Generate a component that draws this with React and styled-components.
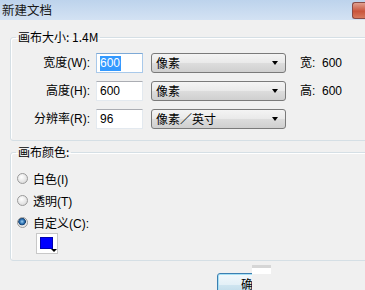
import styled, { createGlobalStyle } from 'styled-components'

const GlobalStyle = createGlobalStyle`
  html, body {
    margin: 0;
    padding: 0;
    background: #f0f0f0;
  }
  body {
    font-family: "Liberation Sans", "Noto Sans CJK SC", sans-serif;
    font-size: 12px;
    color: #000;
  }
`

const sizeRows = [
  { label: '宽度(W):', value: '600', unit: '像素', info: '宽:  600', focused: true },
  { label: '高度(H):', value: '600', unit: '像素', info: '高:  600' },
  { label: '分辨率(R):', value: '96', unit: '像素／英寸' },
]

const colorOptions = [
  { label: '白色(I)' },
  { label: '透明(T)' },
  { label: '自定义(C):', checked: true },
]

export default function App() {
  return (
    <>
      <GlobalStyle />
      <Window>
        <TitleBar>
          <Title>新建文档</Title>
          <CloseButton />
        </TitleBar>

        <Group $mt={10} $pt={9} $pb={11}>
          <Legend>画布大小: 1.4M</Legend>
          <SizeGrid>
            {sizeRows.map((row) => (
              <SizeRow key={row.label}>
                <FieldLabel>{row.label}</FieldLabel>
                <TextInput $focused={row.focused}>
                  {row.focused ? <Selected>{row.value}</Selected> : row.value}
                </TextInput>
                <Select>
                  <span>{row.unit}</span>
                  <SelectArrow />
                </Select>
                <Info>{row.info}</Info>
              </SizeRow>
            ))}
          </SizeGrid>
        </Group>

        <Group $mt={4} $pt={8} $pb={6}>
          <Legend>画布颜色:</Legend>
          {colorOptions.map((opt) => (
            <RadioRow key={opt.label}>
              <Radio $checked={opt.checked} />
              <span>{opt.label}</span>
            </RadioRow>
          ))}
          <Swatch>
            <SwatchColor />
            <SwatchArrow />
          </Swatch>
        </Group>

        <Footer>
          <OkButton>确</OkButton>
          <Cover>
            <CoverGrey />
            <CoverWhite />
          </Cover>
        </Footer>
      </Window>
    </>
  )
}

const Window = styled.div`
  position: relative;
  width: 365px;
  height: 290px;
  overflow: hidden;
  background: #f0f0f0;
`

const TitleBar = styled.div`
  display: flex;
  align-items: center;
  justify-content: space-between;
  height: 20px;
  background: linear-gradient(#bdd3ec, #d3e2f3);
`

const Title = styled.div`
  padding-left: 2px;
  font-family: "Noto Sans CJK SC", sans-serif;
  font-size: 12.5px;
  line-height: 16px;
  color: #1a1a1a;
`

const CloseButton = styled.div`
  align-self: flex-start;
  margin-top: 2px;
  width: 12px;
  height: 15px;
  border: 1px solid #8a4b45;
  border-right: none;
  border-radius: 3px 0 0 3px;
  background: linear-gradient(#e0a08f, #c9553c 55%, #d77a5e);
`

const Group = styled.fieldset`
  margin: ${({ $mt }) => $mt}px 0 0 10px;
  padding: ${({ $pt }) => $pt}px 0 ${({ $pb }) => $pb}px 0;
  width: 370px;
  border: 1px solid #d5dfe5;
  border-radius: 3px;
  box-shadow: inset 1px 1px 0 #fff;
  min-width: 0;
`

const Legend = styled.legend`
  margin-left: 5px;
  padding: 0 2px;
  font-family: "Noto Sans CJK SC", sans-serif;
  font-size: 12px;
  line-height: 14px;
  height: 14px;
`

const SizeGrid = styled.div`
  display: flex;
  flex-direction: column;
  gap: 8px;
`

const SizeRow = styled.div`
  display: grid;
  grid-template-columns: 79px 47px 137px auto;
  column-gap: 6px;
  align-items: center;
  height: 20px;

  & > :nth-child(3) {
    margin-left: 2px;
  }
  & > :nth-child(4) {
    margin-left: 8px;
  }
`

const FieldLabel = styled.div`
  text-align: right;
  line-height: 20px;
  white-space: nowrap;
`

const TextInput = styled.div`
  box-sizing: border-box;
  height: 20px;
  padding: 2px 0 0 3px;
  background: #fff;
  border: 1px solid ${({ $focused }) => ($focused ? '#a9c9ea' : '#e3e9ef')};
  border-top-color: ${({ $focused }) => ($focused ? '#7da9d6' : '#abadb3')};
  line-height: 15px;
  font-size: 12px;
`

const Selected = styled.span`
  display: inline-block;
  background: #3399ff;
  color: #fff;
  padding-right: 1px;
`

const Select = styled.div`
  box-sizing: border-box;
  display: flex;
  align-items: center;
  justify-content: space-between;
  height: 20px;
  padding: 0 7px 0 4px;
  border: 1px solid #7a7a7a;
  border-radius: 3px;
  background: linear-gradient(#f4f4f4, #e9e9e9 50%, #dcdcdc 52%, #cfcfcf);
  font-family: "Noto Sans CJK SC", sans-serif;
  line-height: 18px;
`

const SelectArrow = styled.div`
  width: 0;
  height: 0;
  border-left: 3.5px solid transparent;
  border-right: 3.5px solid transparent;
  border-top: 4px solid #000;
`

const Info = styled.div`
  white-space: pre;
  line-height: 20px;
`

const RadioRow = styled.div`
  display: flex;
  align-items: center;
  gap: 5px;
  height: 22px;
  padding-left: 6px;
  font-family: "Liberation Sans", "Noto Sans CJK SC", sans-serif;
`

const Radio = styled.div`
  box-sizing: border-box;
  width: 11px;
  height: 11px;
  border-radius: 50%;
  border: 1px solid #9a9a9a;
  background: ${({ $checked }) =>
    $checked
      ? 'radial-gradient(circle at 45% 40%, #9fd0f2 0, #2e73b3 30%, #163f6e 48%, #e6e6e6 55%, #f4f4f4 100%)'
      : 'radial-gradient(circle at 40% 35%, #ffffff 0, #e4e4e4 60%, #cfcfcf 100%)'};
`

const Swatch = styled.div`
  position: relative;
  box-sizing: border-box;
  margin-left: 25px;
  width: 22px;
  height: 21px;
  padding: 3px 4px 4px 3px;
  background: #fff;
  border: 1px solid #c8c8c8;
`

const SwatchColor = styled.div`
  width: 100%;
  height: 100%;
  background: #0000ff;
  border: 1px solid #0000b0;
  box-sizing: border-box;
`

const SwatchArrow = styled.div`
  position: absolute;
  right: 0;
  bottom: 1px;
  width: 0;
  height: 0;
  border-left: 3px solid transparent;
  border-right: 3px solid transparent;
  border-top: 3px solid #000;
`

const Footer = styled.div`
  position: relative;
  display: flex;
  padding: 12px 0 0 217px;
`

const OkButton = styled.div`
  box-sizing: border-box;
  width: 75px;
  height: 23px;
  padding-left: 23px;
  border: 1px solid #3c7fb1;
  border-radius: 3px;
  box-shadow: inset 0 0 0 1px #a6e0f5;
  background: linear-gradient(#f2f8fb, #e3f0f7 50%, #cfe5f0 52%, #bcd9e8);
  font-family: "Noto Sans CJK SC", sans-serif;
  font-size: 12px;
  line-height: 20px;
`

const Cover = styled.div`
  position: absolute;
  left: 252px;
  top: 4px;
  right: 0;
  bottom: -10px;
  background: #f0f0f0;
`

const CoverGrey = styled.div`
  width: 19px;
  height: 3px;
  background: #d6d6d6;
`

const CoverWhite = styled.div`
  width: 19px;
  height: 6px;
  background: #ffffff;
`
